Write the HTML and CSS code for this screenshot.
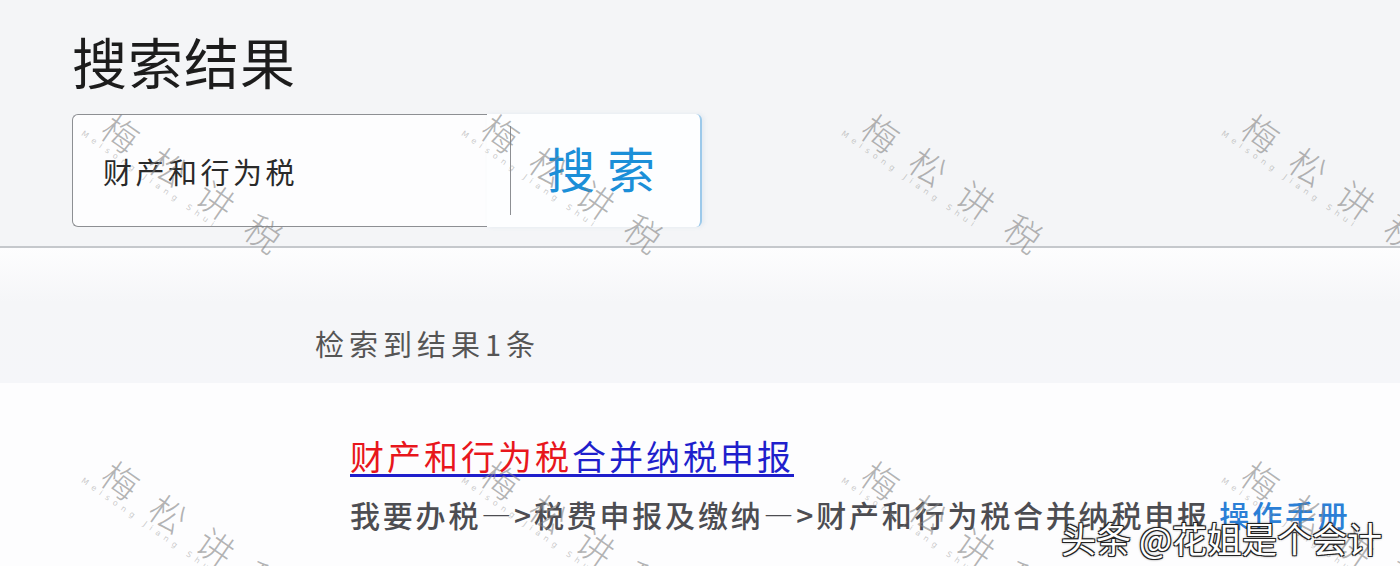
FILE: index.html
```html
<!DOCTYPE html>
<html lang="zh-CN">
<head>
    <meta charset="UTF-8">
    <meta name="viewport" content="width=device-width, initial-scale=1.0">
    <title>搜索结果</title>
    <link rel="stylesheet" href="styles.css">
</head>
<body>
    <div class="page">
        <div class="header">
            <h1>搜索结果</h1>
            <div class="search-group">
                <div class="search-input">财产和行为税</div>
                <button class="search-button">搜索</button>
            </div>
        </div>

        <div class="summary">
            <p>检索到结果1条</p>
        </div>

        <div class="results">
            <a class="result-title" href="#"><span class="hit">财产和行为税</span>合并纳税申报</a>
            <p class="result-path">我要办税—&gt;税费申报及缴纳—&gt;财产和行为税合并纳税申报 <a class="manual" href="#">操作手册</a></p>
        </div>

        <!-- watermark layer -->
        <div class="watermarks">
            <div class="mark"><span class="mark-cn">梅松讲税</span><span class="mark-en">Meisong Jiang Shui</span></div>
            <div class="mark"><span class="mark-cn">梅松讲税</span><span class="mark-en">Meisong Jiang Shui</span></div>
            <div class="mark"><span class="mark-cn">梅松讲税</span><span class="mark-en">Meisong Jiang Shui</span></div>
            <div class="mark"><span class="mark-cn">梅松讲税</span><span class="mark-en">Meisong Jiang Shui</span></div>
            <div class="mark"><span class="mark-cn">梅松讲税</span><span class="mark-en">Meisong Jiang Shui</span></div>
            <div class="mark"><span class="mark-cn">梅松讲税</span><span class="mark-en">Meisong Jiang Shui</span></div>
            <div class="mark"><span class="mark-cn">梅松讲税</span><span class="mark-en">Meisong Jiang Shui</span></div>
            <div class="mark"><span class="mark-cn">梅松讲税</span><span class="mark-en">Meisong Jiang Shui</span></div>
        </div>

        <div class="credit">头条 @花姐是个会计</div>
    </div>
</body>
</html>
```

FILE: styles.css
```css
body {
    margin: 0;
    background-color: #fdfdfe;
    font-family: "Noto Sans CJK SC", "Noto Sans", sans-serif;
}
.page {
    position: relative;
    width: 1400px;
    height: 566px;
    overflow: hidden;
}
.header {
    height: 248px;
    padding: 0 72px;
    background-color: #f4f5f7;
    border-bottom: 2px solid #c5c8cc;
    box-shadow: 0 2px 6px rgba(0, 0, 0, 0.07);
    box-sizing: border-box;
    padding-top: 28px;
}
h1 {
    margin: 0;
    font-size: 55px;
    line-height: 64px;
    letter-spacing: 1px;
    font-weight: 400;
    color: #1c1c1c;
}
.search-group {
    display: flex;
    margin-top: 22px;
    height: 113px;
}
.search-input {
    width: 415px;
    padding-left: 30px;
    border: 1px solid #8d8f93;
    border-right: none;
    border-radius: 6px 0 0 6px;
    background-color: #fdfdfe;
    font-size: 29px;
    letter-spacing: 3.5px;
    color: #2a2a2a;
    display: flex;
    align-items: center;
    box-sizing: border-box;
}
.search-button {
    position: relative;
    width: 215px;
    border: none;
    border-right: 2px solid #9cc9ea;
    border-radius: 0 6px 6px 0;
    background-color: #fdfeff;
    font-family: inherit;
    font-size: 48px;
    letter-spacing: 12px;
    padding: 0 0 8px 60px;
    text-align: left;
    color: #1b8fd8;
    box-shadow: 2px 0 4px rgba(120, 170, 210, 0.15);
}
.search-button::before {
    content: "";
    position: absolute;
    left: 23px;
    top: 12px;
    bottom: 12px;
    border-left: 1px solid #8d8f93;
}
.summary {
    height: 135px;
    padding: 75px 0 0 315px;
    box-sizing: border-box;
    background: linear-gradient(#fdfdfe, #f5f6f8 40%, #f5f6f9);
}
.summary p {
    margin: 0;
    font-size: 29px;
    line-height: 40px;
    letter-spacing: 5px;
    color: #555;
}
.results {
    padding: 51px 0 0 350px;
}
.result-title {
    display: inline-block;
    font-size: 34px;
    line-height: 44px;
    letter-spacing: 3px;
    color: #1f1fcc;
    text-decoration: underline;
    text-underline-offset: 4px;
}
.hit {
    color: #e8161c;
}
.result-path {
    margin: 16px 0 0;
    font-size: 30px;
    line-height: 40px;
    letter-spacing: 2.8px;
    font-weight: 500;
    color: #4d4d52;
    white-space: nowrap;
}
.manual {
    color: #2b7fd6;
    text-decoration: none;
}
.watermarks {
    position: absolute;
    top: 0;
    left: 0;
    padding: 106px 0 0 118px;
    display: grid;
    grid-template-columns: repeat(4, 380px);
    grid-template-rows: 347px 347px;
    pointer-events: none;
}
.mark {
    display: flex;
    flex-direction: column;
    transform: rotate(35deg);
    transform-origin: left top;
    color: rgba(130, 130, 130, 0.6);
}
.mark-cn {
    font-size: 36px;
    line-height: 38px;
    letter-spacing: 22px;
    white-space: nowrap;
    font-weight: 300;
}
.mark-en {
    margin-left: -14px;
    font-family: "DejaVu Sans", sans-serif;
    font-size: 8px;
    letter-spacing: 5px;
    white-space: nowrap;
    color: rgba(150, 150, 150, 0.5);
}
.credit {
    position: absolute;
    right: 18px;
    bottom: 6px;
    font-size: 35px;
    line-height: 44px;
    color: #fff;
    text-shadow: -1px -1px 0 #222, 1px -1px 0 #222, -1px 1px 0 #222, 1px 1px 0 #222, 0 0 3px #000;
}
```
